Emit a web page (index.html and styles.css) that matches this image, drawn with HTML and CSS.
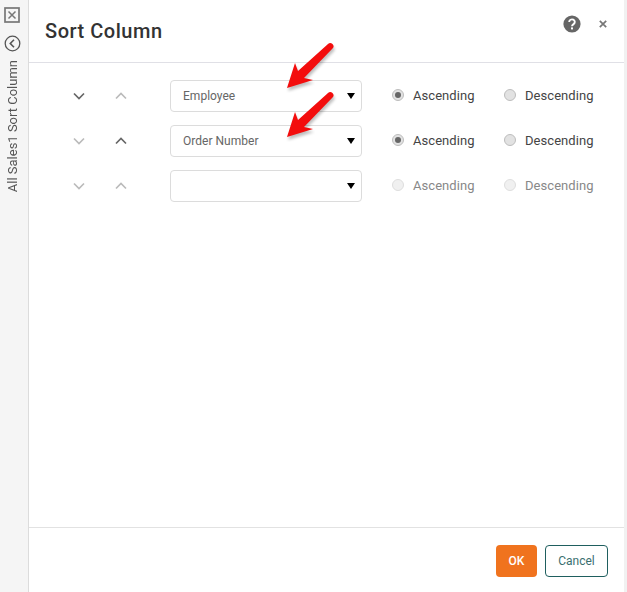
FILE: index.html
```html
<!DOCTYPE html>
<html lang="en">
<head>
<meta charset="utf-8">
<title>Sort Column</title>
<link rel="stylesheet" href="styles.css">
</head>
<body>
<div class="page">
  <aside class="rail">
    <svg class="rail-close" width="16" height="16" viewBox="0 0 16 16"><rect x="1" y="1" width="14" height="14" fill="none" stroke="#777" stroke-width="1.7"/><path d="M4.5 4.5l7 7M11.5 4.5l-7 7" stroke="#777" stroke-width="1.5"/></svg>
    <svg class="rail-back" width="17" height="17" viewBox="0 0 17 17"><circle cx="8.5" cy="8.5" r="7.3" fill="none" stroke="#555" stroke-width="1.3"/><path d="M10 4.8L6.3 8.5l3.7 3.7" fill="none" stroke="#555" stroke-width="1.6"/></svg>
    <div class="rail-label">All Sales1 Sort Column</div>
  </aside>
  <main class="dialog">
    <header class="head">
      <h1 class="title">Sort Column</h1>
      <svg class="help" width="18" height="18" viewBox="0 0 18 18"><circle cx="9" cy="9" r="8.6" fill="#666"/><path d="M6.2 7a2.8 2.6 0 1 1 4.4 2.1C9.6 9.8 9 10.2 9 11.2" fill="none" stroke="#fff" stroke-width="1.9"/><rect x="8" y="12.4" width="2" height="2" fill="#fff"/></svg>
      <svg class="close" width="8" height="8" viewBox="0 0 8 8"><path d="M.8.8l6.4 6.4M7.2.8L.8 7.2" stroke="#777" stroke-width="1.7"/></svg>
    </header>
    <section class="rows">
      <div class="row">
        <div class="arrows">
          <svg width="12" height="8" viewBox="0 0 12 8"><path d="M1 1.5l5 5 5-5" fill="none" stroke="#666" stroke-width="1.7"/></svg>
          <svg width="12" height="8" viewBox="0 0 12 8"><path d="M1 6.5l5-5 5 5" fill="none" stroke="#bbb" stroke-width="1.7"/></svg>
        </div>
        <div class="select"><span>Employee</span><i class="caret"></i></div>
        <div class="radios">
          <label class="radio"><i class="dot on"></i>Ascending</label>
          <label class="radio"><i class="dot"></i>Descending</label>
        </div>
      </div>
      <div class="row">
        <div class="arrows">
          <svg width="12" height="8" viewBox="0 0 12 8"><path d="M1 1.5l5 5 5-5" fill="none" stroke="#bbb" stroke-width="1.7"/></svg>
          <svg width="12" height="8" viewBox="0 0 12 8"><path d="M1 6.5l5-5 5 5" fill="none" stroke="#666" stroke-width="1.7"/></svg>
        </div>
        <div class="select"><span>Order Number</span><i class="caret"></i></div>
        <div class="radios">
          <label class="radio"><i class="dot on"></i>Ascending</label>
          <label class="radio"><i class="dot"></i>Descending</label>
        </div>
      </div>
      <div class="row">
        <div class="arrows">
          <svg width="12" height="8" viewBox="0 0 12 8"><path d="M1 1.5l5 5 5-5" fill="none" stroke="#bbb" stroke-width="1.7"/></svg>
          <svg width="12" height="8" viewBox="0 0 12 8"><path d="M1 6.5l5-5 5 5" fill="none" stroke="#bbb" stroke-width="1.7"/></svg>
        </div>
        <div class="select"><span></span><i class="caret"></i></div>
        <div class="radios disabled">
          <label class="radio"><i class="dot"></i>Ascending</label>
          <label class="radio"><i class="dot"></i>Descending</label>
        </div>
      </div>
    </section>
    <footer class="foot">
      <button class="btn ok">OK</button>
      <button class="btn cancel">Cancel</button>
    </footer>
    <svg class="arrow arrow-a" width="60" height="60" viewBox="0 0 60 60"><defs><filter id="soft" x="-20%" y="-20%" width="140%" height="140%"><feGaussianBlur stdDeviation="1.5"/></filter></defs><path d="M7 48L15 23l3 8L48 4a2.600 2.600 0 0 1 4.500 4.500L24 38l9 2z" fill="#000" opacity=".25" filter="url(#soft)" transform="translate(1 3)"/><path d="M7 48L15 23l3 8L48 4a2.600 2.600 0 0 1 4.500 4.500L24 38l9 2z" fill="#f30d0d"/></svg>
    <svg class="arrow arrow-b" width="60" height="60" viewBox="0 0 60 60"><path d="M7 48L15 23l3 8L48 4a2.600 2.600 0 0 1 4.500 4.500L24 38l9 2z" fill="#000" opacity=".25" filter="url(#soft)" transform="translate(1 3)"/><path d="M7 48L15 23l3 8L48 4a2.600 2.600 0 0 1 4.500 4.500L24 38l9 2z" fill="#f30d0d"/></svg>
  </main>
</div>
</body>
</html>
```
FILE: styles.css
```css
* { box-sizing: border-box; }
html, body { margin: 0; height: 100%; background: #fff; }
body { font-family: Roboto, "Liberation Sans", sans-serif; overflow: hidden; }
.page { display: flex; width: 627px; height: 592px; background: #f1f1f1; }
.rail {
  width: 29px; flex: none; background: #f5f5f5; border-right: 1px solid #dcdcdc;
  display: flex; flex-direction: column; align-items: center; padding-top: 7px;
}
.rail-close { margin-left: -4px; }
.rail-back { margin: 12px 0 0 -4px; }
.rail-label {
  writing-mode: vertical-rl; transform: rotate(180deg);
  font-size: 13px; line-height: 15px; color: #555; margin: 8px 0 0 -3px; white-space: nowrap;
}
.dialog { position: relative; width: 595px; flex: none; background: #fff; display: flex; flex-direction: column; }
.head {
  height: 63px; flex: none; border-bottom: 1px solid #e0e0e6;
  display: flex; align-items: center; padding: 0 17px 0 16px;
}
.title { margin: 0; font-size: 20px; font-weight: 500; color: #333; letter-spacing: .52px; flex: 1; }
.help { margin: -14px 0 0 0; }
.close { margin: -14px 0 0 18px; }
.rows { flex: 1; padding-top: 17px; display: flex; flex-direction: column; gap: 13px; }
.row { display: flex; align-items: center; height: 32px; }
.arrows { display: flex; gap: 30px; margin-left: 44px; width: 97px; }
.select {
  width: 192px; height: 32px; border: 1px solid #dcdcdc; border-radius: 4px;
  display: flex; align-items: center; justify-content: space-between;
  padding: 0 6px 0 12px; font-size: 12px; color: #666; letter-spacing: .02px;
}
.caret { width: 0; height: 0; border-left: 4.500px solid transparent; border-right: 4.500px solid transparent; border-top: 6px solid #000; }
.radios { display: flex; margin: 0 0 2px 30px; }
.radio { display: flex; align-items: center; font-size: 13px; color: #444; letter-spacing: .05px; width: 112px; }
.dot { width: 12px; height: 12px; border-radius: 50%; background: #e2e2e2; border: 1px solid #bdbdbd; margin-right: 9px; flex: none; position: relative; }
.dot.on::after { content: ""; position: absolute; left: 2px; top: 2px; width: 6px; height: 6px; border-radius: 50%; background: #666; }
.disabled .radio { color: #888; }
.disabled .dot { background: #f0f0f0; border-color: #dedede; }
.foot {
  height: 65px; flex: none; border-top: 1px solid #e2e2e2;
  display: flex; justify-content: flex-end; align-items: center; gap: 8px; padding: 2px 16px 0 0;
}
.btn { height: 32px; border-radius: 4px; font-family: inherit; font-size: 12px; padding: 0; }
.ok { width: 41px; background: #f0731e; border: 0; color: #fff; font-weight: 500; }
.cancel { width: 63px; background: #fff; border: 1px solid #1f5f5f; color: #3a6f6f; }
.arrow { position: absolute; pointer-events: none; }
.arrow-a { left: 251px; top: 40px; }
.arrow-b { left: 251px; top: 89px; }
```
